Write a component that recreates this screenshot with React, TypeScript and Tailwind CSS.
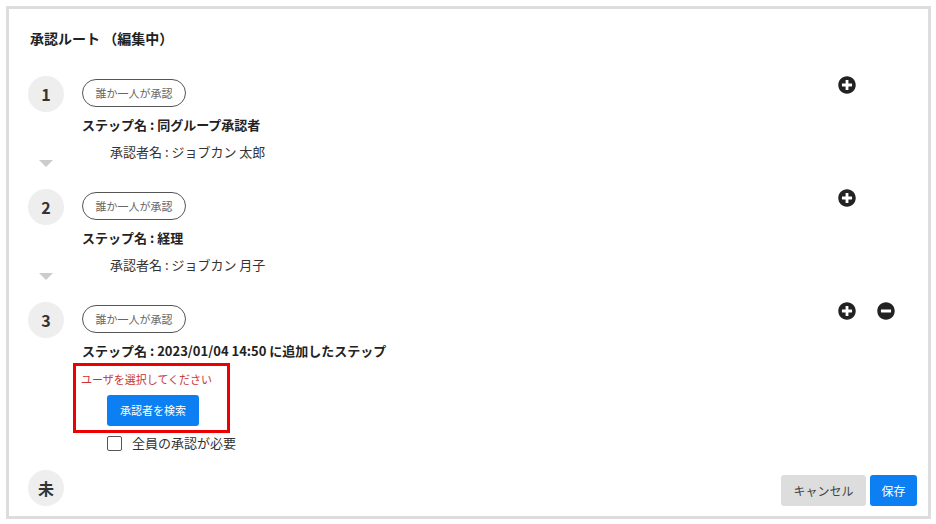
import React from 'react';
import { FaPlusCircle, FaMinusCircle } from 'react-icons/fa';

interface Step {
  no: string;
  name: string;
  approver?: string;
  removable?: boolean;
}

const steps: Step[] = [
  { no: '1', name: '同グループ承認者', approver: 'ジョブカン 太郎' },
  { no: '2', name: '経理', approver: 'ジョブカン 月子' },
];

const Circle: React.FC<{ label: string }> = ({ label }) => (
  <div className="w-9 h-9 rounded-full bg-[#eeeeee] flex items-center justify-center text-[16px] font-bold text-[#333333] shrink-0">
    {label}
  </div>
);

const Badge: React.FC = () => (
  <div className="mt-[3px] h-[28px] w-[104px] rounded-full border border-[#555555] flex items-center justify-center text-[11px] text-[#666666]">
    誰か一人が承認
  </div>
);

const Icons: React.FC<{ removable?: boolean }> = ({ removable }) => (
  <div className="w-[57px] flex gap-[21px] text-[#222222]">
    <FaPlusCircle size={18} />
    {removable && <FaMinusCircle size={18} />}
  </div>
);

const StepRow: React.FC<{ step: Step }> = ({ step }) => (
  <div className="h-[113px] flex pr-[33px]">
    <div className="w-9 flex flex-col items-center">
      <Circle label={step.no} />
      <div className="mt-[48px] w-0 h-0 border-l-[7px] border-r-[7px] border-t-[7px] border-l-transparent border-r-transparent border-t-[#cccccc]" />
    </div>
    <div className="flex-1 ml-[18px]">
      <Badge />
      <p className="mt-[8px] text-[13px] leading-[20px] font-bold text-[#222222]">ステップ名 : {step.name}</p>
      <p className="mt-[7px] pl-[28px] text-[13px] leading-[20px] text-[#333333]">承認者名 : {step.approver}</p>
    </div>
    <Icons />
  </div>
);

export default function App() {
  return (
    <div className="w-[936px] h-[524px] bg-white pt-[6px] pl-[6px] font-['Noto_Sans_CJK_JP',sans-serif]">
      <div className="w-[925px] h-[513px] border-[3px] border-[#dddddd] flex flex-col">
        <h2 className="pt-[19px] pl-[21px] text-[14px] leading-[20px] font-bold text-[#222222]">承認ルート （編集中）</h2>

        <div className="mt-[28px] pl-[19px]">
          {steps.map((s) => (
            <StepRow key={s.no} step={s} />
          ))}

          <div className="flex pr-[33px]">
            <Circle label="3" />
            <div className="flex-1 ml-[18px]">
              <Badge />
              <p className="mt-[8px] text-[13px] leading-[20px] font-bold text-[#222222]">
                ステップ名 : 2023/01/04 14:50 に追加したステップ
              </p>
              <div className="mt-[2px] -ml-[9px] w-[157px] border-[3px] border-[#ee0000] pt-[5px] pb-[4px] pl-[5px]">
                <p className="text-[11px] leading-[16px] text-[#cc3333]">ユーザを選択してください</p>
                <button className="mt-[8px] ml-[26px] w-[92px] h-[31px] rounded-[3px] bg-[#0c7ff2] text-white text-[11px]">
                  承認者を検索
                </button>
              </div>
              <label className="ml-[25px] flex items-center h-[20px] text-[13px] text-[#333333]">
                <span className="w-[15px] h-[15px] border border-[#555555] rounded-[2px] bg-white" />
                <span className="ml-[10px]">全員の承認が必要</span>
              </label>
            </div>
            <Icons removable />
          </div>

          <div className="mt-[17px] flex items-end justify-between pr-[11px]">
            <Circle label="未" />
            <div className="flex gap-[4px]">
              <button className="w-[85px] h-[31px] rounded-[3px] bg-[#dddddd] text-[12px] text-[#444444]">キャンセル</button>
              <button className="w-[47px] h-[31px] rounded-[3px] bg-[#0c7ff2] text-[12px] text-white">保存</button>
            </div>
          </div>
        </div>
      </div>
    </div>
  );
}
